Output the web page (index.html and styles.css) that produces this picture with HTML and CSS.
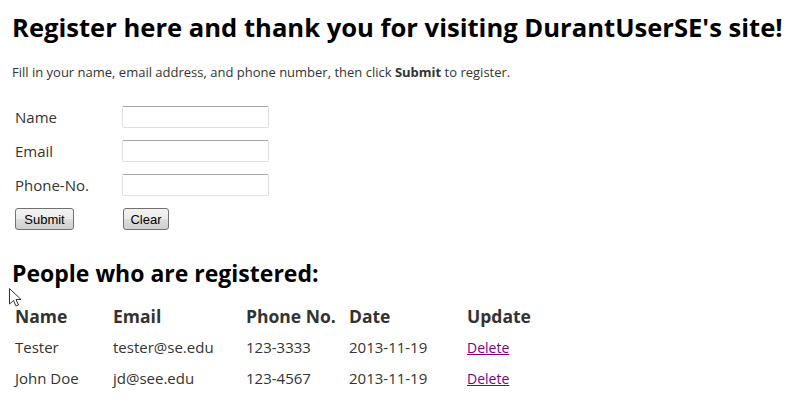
FILE: index.html
```html
<!DOCTYPE html>
<html>
<head>
    <title>Register</title>
    <link rel="stylesheet" href="styles.css">
</head>
<body>
    <h1>Register here and thank you for visiting DurantUserSE's site!</h1>
    <p class="intro">Fill in your name, email address, and phone number, then click <b>Submit</b> to register.</p>

    <!-- the registration form -->
    <form class="register">
        <table class="form-table">
            <tr>
                <td class="label">Name</td>
                <td><input type="text" class="field"></td>
            </tr>
            <tr>
                <td class="label">Email</td>
                <td><input type="text" class="field"></td>
            </tr>
            <tr>
                <td class="label">Phone-No.</td>
                <td><input type="text" class="field"></td>
            </tr>
            <tr>
                <td class="label"><button type="button" class="btn btn-submit">Submit</button></td>
                <td><button type="reset" class="btn btn-clear">Clear</button></td>
            </tr>
        </table>
    </form>

    <!-- the list of registered people -->
    <h2>People who are registered:</h2>
    <table class="people">
        <tr>
            <th class="c-name">Name</th>
            <th class="c-email">Email</th>
            <th class="c-phone">Phone No.</th>
            <th class="c-date">Date</th>
            <th>Update</th>
        </tr>
        <tr>
            <td>Tester</td>
            <td>tester@se.edu</td>
            <td>123-3333</td>
            <td>2013-11-19</td>
            <td><a href="#">Delete</a></td>
        </tr>
        <tr>
            <td>John Doe</td>
            <td>jd@see.edu</td>
            <td>123-4567</td>
            <td>2013-11-19</td>
            <td><a href="#">Delete</a></td>
        </tr>
    </table>

    <!-- mouse pointer left in the screenshot -->
    <svg class="pointer" width="14" height="20" viewBox="0 0 14 20">
        <path d="M0.5 0.5 V16 L4.5 12.5 L7 18 L9.5 17 L7 11.5 L12 11.5 Z" fill="#fff" stroke="#333" stroke-width="1" stroke-linejoin="round"/>
    </svg>
</body>
</html>
```

FILE: styles.css
```css
/* page */
body {
    font-family: "Open Sans", "Noto Sans", sans-serif;
    color: #333;
    margin: 0 12px;
}

h1 {
    font-size: 25.6px;
    color: #000;
    margin: 11px 0 0;
    line-height: 34px;
    white-space: nowrap;
}

.intro {
    font-size: 13px;
    margin: 18px 0 0;
    line-height: 18px;
}

/* the form */
.register {
    margin-top: 19px;
}
.form-table {
    border-spacing: 2px 0;
}
.form-table td {
    padding: 0 1px;
    height: 34px;
}
.form-table .label {
    width: 104px;
    font-size: 15px;
}
.field {
    width: 147px;
    height: 22px;
    box-sizing: border-box;
    border: 1px solid #dde1e7;
    border-top-color: #a5a5a5;
    border-radius: 2px;
    margin: 0 0 0 -1px;
    display: block;
}
.btn {
    font-family: "Liberation Sans", Arial, sans-serif;
    font-size: 13px;
    color: #000;
    height: 22px;
    padding: 0;
    border: 1px solid #707070;
    border-radius: 3px;
    background: linear-gradient(#f2f2f2 0%, #ebebeb 50%, #dddddd 51%, #cfcfcf 100%);
    display: block;
}
.btn-submit { width: 59px; }
.btn-clear { width: 46px; }

/* the table of people */
h2 {
    font-size: 23px;
    color: #000;
    margin: 22px 0 0;
    line-height: 30px;
}
.people {
    margin-top: 13px;
    border-spacing: 2px 0;
}
.people th {
    text-align: left;
    font-size: 17.5px;
    height: 30px;
    padding: 0 1px;
}
.people td {
    font-size: 15px;
    height: 31px;
    padding: 0 1px;
}
.c-name { width: 94px; }
.c-email { width: 129px; }
.c-phone { width: 99px; }
.c-date { width: 114px; }

a {
    color: #800080;
    font-size: 14px;
}

.pointer {
    position: absolute;
    left: 9px;
    top: 288px;
}
```
